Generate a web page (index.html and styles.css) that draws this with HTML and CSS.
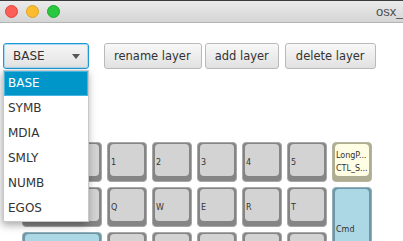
FILE: index.html
```html
<!DOCTYPE html>
<html lang="en">
<head>
    <meta charset="UTF-8">
    <meta name="viewport" content="width=device-width, initial-scale=1.0">
    <title>osx_keymap</title>
    <link rel="stylesheet" href="styles.css">
</head>
<body>
    <div class="window">
        <div class="titlebar">
            <span class="light red"></span>
            <span class="light yellow"></span>
            <span class="light green"></span>
            <span class="title">osx_keymap_editor</span>
        </div>
        <div class="content">
            <div class="toolbar">
                <div class="combo">
                    <span>BASE</span>
                    <span class="arrow"></span>
                </div>
                <button class="btn rename">rename layer</button>
                <button class="btn">add layer</button>
                <button class="btn delete">delete layer</button>
            </div>
            <ul class="popup">
                <li class="selected">BASE</li>
                <li>SYMB</li>
                <li>MDIA</li>
                <li>SMLY</li>
                <li>NUMB</li>
                <li>EGOS</li>
            </ul>
            <div class="keyboard">
                <div class="key wide"><span>=</span></div>
                <div class="key"><span>1</span></div>
                <div class="key"><span>2</span></div>
                <div class="key"><span>3</span></div>
                <div class="key"><span>4</span></div>
                <div class="key"><span>5</span></div>
                <div class="key yellow"><span>LongP...<br>CTL_S...</span></div>

                <div class="key wide"><span>Tab</span></div>
                <div class="key"><span>Q</span></div>
                <div class="key"><span>W</span></div>
                <div class="key"><span>E</span></div>
                <div class="key"><span>R</span></div>
                <div class="key"><span>T</span></div>
                <div class="key blue tall"><span>Cmd</span></div>

                <div class="key wide blue"><span>Esc</span></div>
                <div class="key"><span>A</span></div>
                <div class="key"><span>S</span></div>
                <div class="key"><span>D</span></div>
                <div class="key"><span>F</span></div>
                <div class="key"><span>G</span></div>
            </div>
        </div>
    </div>
</body>
</html>
```

FILE: styles.css
```css
body{
    margin: 0;
    background-color: white;
    font-family: "DejaVu Sans", sans-serif;
    color: #333;
}
.window{
    width: 403px;
    height: 241px;
    overflow: hidden;
}
.titlebar{
    display: flex;
    align-items: center;
    height: 21px;
    padding-left: 5px;
    gap: 8px;
    border-top: 1px solid #3a3a3a;
    border-bottom: 1px solid #b4b4b4;
    background: linear-gradient(#ebebeb, #d5d5d5);
    white-space: nowrap;
    overflow: hidden;
}
.light{
    width: 11px;
    height: 11px;
    border-radius: 50%;
    flex: none;
}
.red{
    background-color: #fc5f57;
    border: 0.5px solid #e0443e;
}
.yellow{
    background-color: #fdbc2e;
    border: 0.5px solid #dea123;
}
.green{
    background-color: #29c840;
    border: 0.5px solid #1aab29;
}
.title{
    margin-left: 308px;
    font-family: "Liberation Sans", sans-serif;
    font-size: 13px;
    color: #4d4d4d;
}
.content{
    position: relative;
    padding: 20px 0 0 3px;
}
.toolbar{
    display: flex;
    align-items: center;
    height: 26px;
}
.combo{
    display: flex;
    align-items: center;
    justify-content: space-between;
    box-sizing: border-box;
    width: 86px;
    height: 26px;
    padding: 0 8px 0 9px;
    border: 1px solid #1f9ad6;
    border-radius: 3px;
    box-shadow: inset 0 0 0 1px #a9d9f2;
    background: linear-gradient(#f6f6f6, #e2e2e2);
    font-size: 12px;
    color: #333;
}
.arrow{
    width: 0;
    height: 0;
    border-left: 4px solid transparent;
    border-right: 4px solid transparent;
    border-top: 5px solid #555;
}
.btn{
    height: 26px;
    padding: 0 9px;
    margin: 0;
    border: 1px solid #b9b9b9;
    border-radius: 3px;
    background: linear-gradient(#f8f8f8, #e1e1e1);
    font-family: "DejaVu Sans", sans-serif;
    font-size: 11.5px;
    color: #333;
}
.rename{
    margin-left: 15px;
    padding: 0 10px 0 9px;
}
.btn + .btn{
    margin-left: 3px;
}
.btn.delete{
    margin-left: 6px;
    padding: 0 10px;
}
.popup{
    position: absolute;
    left: 3px;
    top: 47px;
    width: 86px;
    box-sizing: border-box;
    margin: 0;
    padding: 0;
    list-style: none;
    background-color: white;
    border: 1px solid #c8c8c8;
    box-shadow: -1px 3px 8px rgba(0, 0, 0, 0.35);
    z-index: 2;
}
.popup li{
    height: 25px;
    line-height: 25px;
    padding-left: 4px;
    font-size: 12px;
    color: #333;
}
.popup .selected{
    background-color: #0096c9;
    box-shadow: inset 0 0 0 1px #47b5e2;
    color: white;
}
.keyboard{
    display: grid;
    grid-template-columns: 80px repeat(6, 40px);
    grid-template-rows: repeat(3, 40px);
    gap: 5px;
    margin: 73px 0 0 19px;
}
.key{
    position: relative;
    box-sizing: border-box;
    display: flex;
    align-items: center;
    padding-left: 3px;
    border: 1px solid #a7a7a7;
    border-radius: 4px;
    background-color: #858585;
    font-size: 8px;
    color: #333;
    overflow: hidden;
}
.key::before{
    content: "";
    position: absolute;
    left: 2px;
    right: 2px;
    top: 1px;
    bottom: 5px;
    border-radius: 4px;
    background-color: #d3d3d3;
}
.key span{
    position: relative;
    line-height: 13px;
    white-space: nowrap;
}
.key.wide{
    grid-column: 1;
}
.key.yellow{
    border-color: #b7b69d;
    background-color: #aeac93;
}
.key.yellow::before{
    background-color: #fffde3;
}
.key.blue{
    border-color: #8fb0bb;
    background-color: #6f96a4;
}
.key.blue::before{
    background-color: #acd8e6;
}
.key.tall{
    grid-row: span 2;
}
```
